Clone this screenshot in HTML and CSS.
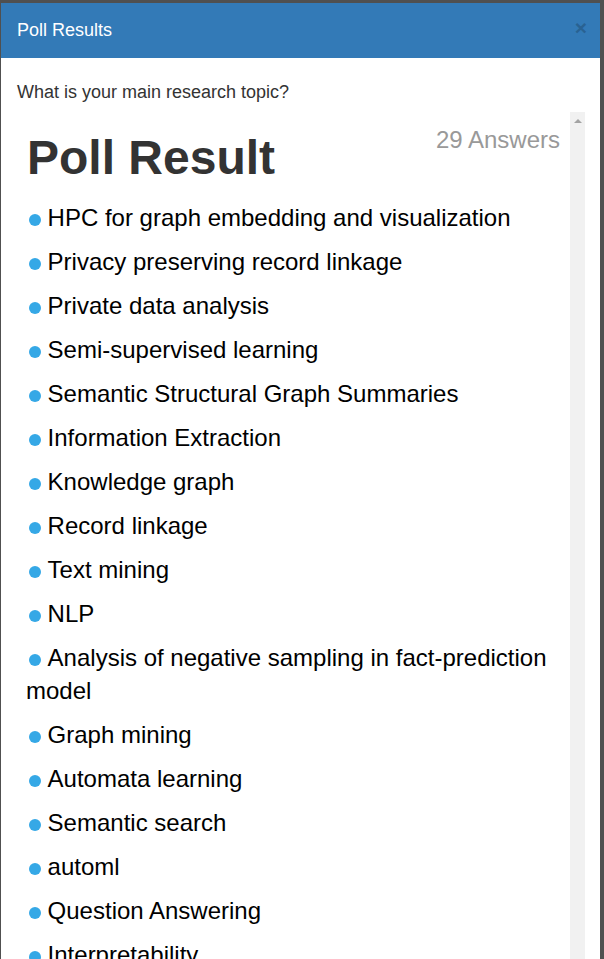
FILE: index.html
```html
<!DOCTYPE html>
<html>
<head>
<meta charset="utf-8">
<link rel="stylesheet" href="styles.css">
</head>
<body>
<div class="modal">
  <div class="modal-header">
    <h4 class="modal-title">Poll Results</h4>
    <span class="close">×</span>
  </div>
  <div class="modal-body">
    <p class="question">What is your main research topic?</p>
    <div class="result-box">
      <div class="result-content">
        <span class="answers">29 Answers</span>
        <h1 class="result-title">Poll Result</h1>
        <ul class="result-list">
          <li><span class="dot"></span>HPC for graph embedding and visualization</li>
          <li><span class="dot"></span>Privacy preserving record linkage</li>
          <li><span class="dot"></span>Private data analysis</li>
          <li><span class="dot"></span>Semi-supervised learning</li>
          <li><span class="dot"></span>Semantic Structural Graph Summaries</li>
          <li><span class="dot"></span>Information Extraction</li>
          <li><span class="dot"></span>Knowledge graph</li>
          <li><span class="dot"></span>Record linkage</li>
          <li><span class="dot"></span>Text mining</li>
          <li><span class="dot"></span>NLP</li>
          <li><span class="dot"></span>Analysis of negative sampling in fact-prediction model</li>
          <li><span class="dot"></span>Graph mining</li>
          <li><span class="dot"></span>Automata learning</li>
          <li><span class="dot"></span>Semantic search</li>
          <li><span class="dot"></span>automl</li>
          <li><span class="dot"></span>Question Answering</li>
          <li><span class="dot"></span>Interpretability</li>
        </ul>
      </div>
      <div class="scrollbar"><span class="arrow"></span></div>
    </div>
  </div>
</div>
</body>
</html>
```

FILE: styles.css
```css
html, body {
  margin: 0;
  padding: 0;
  height: 100%;
  overflow: hidden;
}
body {
  background: #505050;
  font-family: "Liberation Sans", Arial, sans-serif;
  padding-top: 3px;
  box-sizing: border-box;
}
.modal {
  margin-left: 1px;
  width: 599px;
  background: #fff;
  height: 1200px;
}
.modal-header {
  background: #337ab7;
  display: flex;
  justify-content: space-between;
  align-items: center;
  padding: 15px 13px 15px 16px;
}
.modal-title {
  margin: 0;
  font-size: 18px;
  line-height: 25px;
  font-weight: normal;
  color: #fff;
}
.close {
  font-size: 21px;
  font-weight: bold;
  line-height: 1;
  color: #296292;
  margin-top: -7px;
}
.modal-body {
  padding: 23px 15px 0 15px;
}
.question {
  margin: 0 0 8px 1px;
  font-size: 18px;
  line-height: 23px;
  color: #333;
}
.result-box {
  display: flex;
  height: 900px;
}
.result-content {
  flex: 1;
  padding: 0 10px 20px 10px;
}
.answers {
  float: right;
  margin-top: 11px;
  font-size: 24px;
  line-height: 34px;
  color: #999;
}
.result-title {
  margin: 20px 0 11px 1px;
  font-size: 48px;
  line-height: 52.8px;
  font-weight: bold;
  color: #333;
}
.result-list {
  list-style: none;
  margin: 0;
  padding: 0;
}
.result-list li {
  font-size: 24px;
  line-height: 33px;
  padding: 5.5px 0;
  color: #000;
}
.dot {
  display: inline-block;
  width: 12px;
  height: 12px;
  border-radius: 50%;
  background: #35a8e6;
  margin-left: 3px;
  margin-right: 6.6px;
}
.scrollbar {
  width: 15px;
  background: #f1f1f1;
  display: flex;
  justify-content: center;
}
.arrow {
  margin-top: 7px;
  width: 0;
  height: 0;
  border-left: 4px solid transparent;
  border-right: 4px solid transparent;
  border-bottom: 4px solid #a3a3a3;
}
```
